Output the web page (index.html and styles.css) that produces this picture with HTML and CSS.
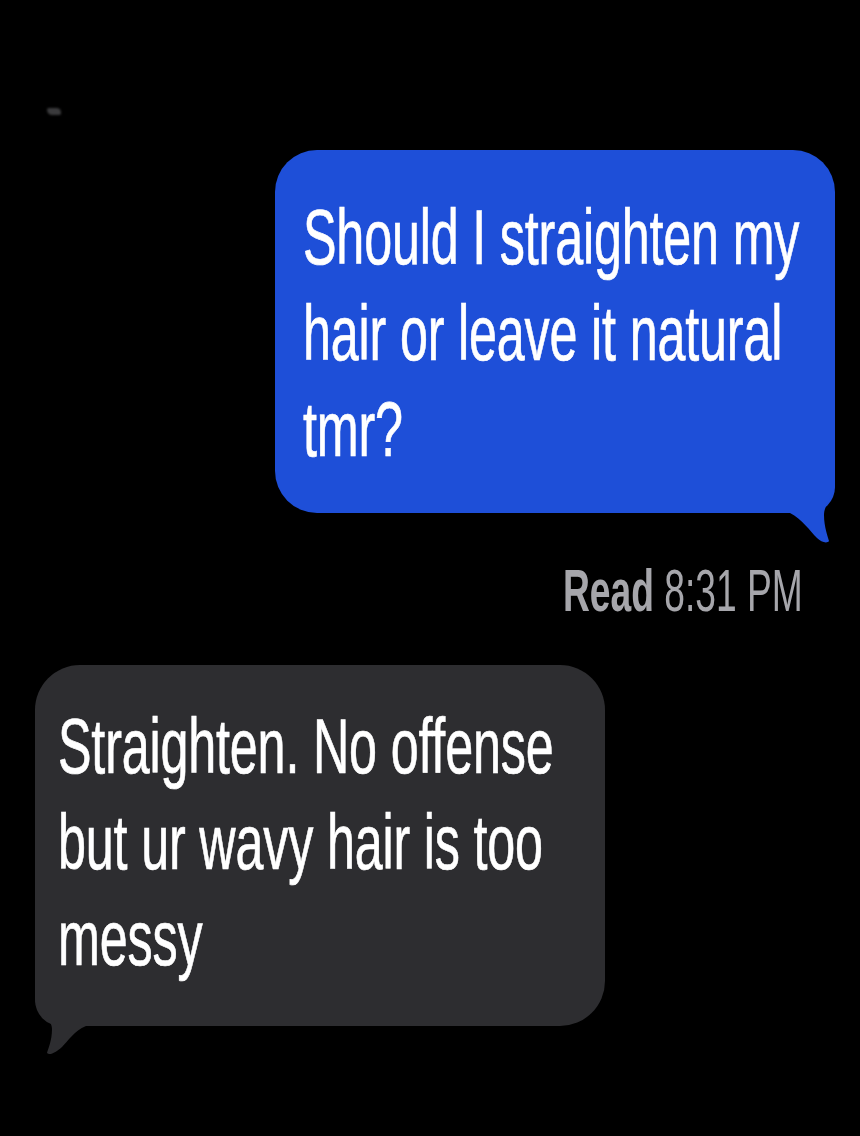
FILE: index.html
```html
<!DOCTYPE html>
<html lang="en">
<head>
<meta charset="utf-8">
<title>Messages</title>
<link rel="stylesheet" href="styles.css">
</head>
<body>
<main class="thread">
  <div class="speck"></div>

  <div class="bubble sent">
    <div class="msg-wrap">
      <p class="msg">Should I straighten my<br>hair or leave it natural<br>tmr?</p>
    </div>
    <svg class="tail tail-sent" width="80" height="75" viewBox="0 0 80 75" aria-hidden="true">
      <path d="M0,0 H75 V12 C75,26 64,32 64,44 C64,56 68,66 69,70 C67,73 61,71 57,67 C50,60 42,48 30,42 H0 Z"/>
    </svg>
  </div>

  <div class="receipt"><span class="receipt-text"><b>Read</b> 8:31 PM</span></div>

  <div class="bubble received">
    <div class="msg-wrap">
      <p class="msg">Straighten. No offense<br>but ur wavy hair is too<br>messy</p>
    </div>
    <svg class="tail tail-received" width="80" height="78" viewBox="0 0 80 78" aria-hidden="true">
      <path d="M80,0 H5 V17 C5,32 22,36 22,48 C22,60 18,68 17,72 C20,75 26,71 32,66 C38,60 44,50 56,45 H80 Z"/>
    </svg>
  </div>
</main>
</body>
</html>
```

FILE: styles.css
```css
* {
  box-sizing: border-box;
}

html, body {
  margin: 0;
  padding: 0;
  background: #000;
}

body {
  width: 860px;
  height: 1136px;
  overflow: hidden;
  font-family: "Liberation Sans", Arial, sans-serif;
}

.thread {
  display: flex;
  flex-direction: column;
  padding-top: 108px;
}

.speck {
  width: 14px;
  height: 7px;
  margin-left: 47px;
  background: #3a3a3c;
  border-radius: 2px 5px 2px 6px;
  filter: blur(1px);
}

.bubble {
  position: relative;
  border-radius: 42px;
}

.msg-wrap {
  overflow: hidden;
  width: 100%;
  height: 100%;
}

.msg {
  margin: 0;
  color: #fff;
  font-size: 78px;
  line-height: 96px;
  white-space: nowrap;
  display: inline-block;
  transform: scaleX(0.645);
  transform-origin: left top;
  letter-spacing: -0.3px;
  -webkit-text-stroke: 0.7px #fff;
}

.sent {
  align-self: flex-start;
  margin-top: 35px;
  margin-left: 275px;
  width: 560px;
  height: 363px;
  background: #1e4fd8;
  border-bottom-right-radius: 26px;
}

.sent .msg-wrap {
  padding: 39px 0 0 28px;
}

.tail {
  position: absolute;
  display: block;
}

.tail-sent {
  left: 485px;
  top: 321px;
  fill: #1e4fd8;
}

.receipt {
  margin-top: 48px;
  width: 803px;
  height: 60px;
  display: flex;
  justify-content: flex-end;
}

.receipt-text {
  display: inline-block;
  color: #a6a6ab;
  font-size: 60px;
  line-height: 60px;
  white-space: nowrap;
  transform: scaleX(0.62);
  transform-origin: right top;
}

.receipt-text b {
  font-weight: 700;
}

.received {
  align-self: flex-start;
  margin-top: 44px;
  margin-left: 35px;
  width: 570px;
  height: 361px;
  background: #2d2d30;
  border-radius: 45px;
  border-bottom-left-radius: 26px;
}

.received .msg-wrap {
  padding: 33px 0 0 23px;
}

.tail-received {
  left: -5px;
  top: 316px;
  fill: #2d2d30;
}
```
